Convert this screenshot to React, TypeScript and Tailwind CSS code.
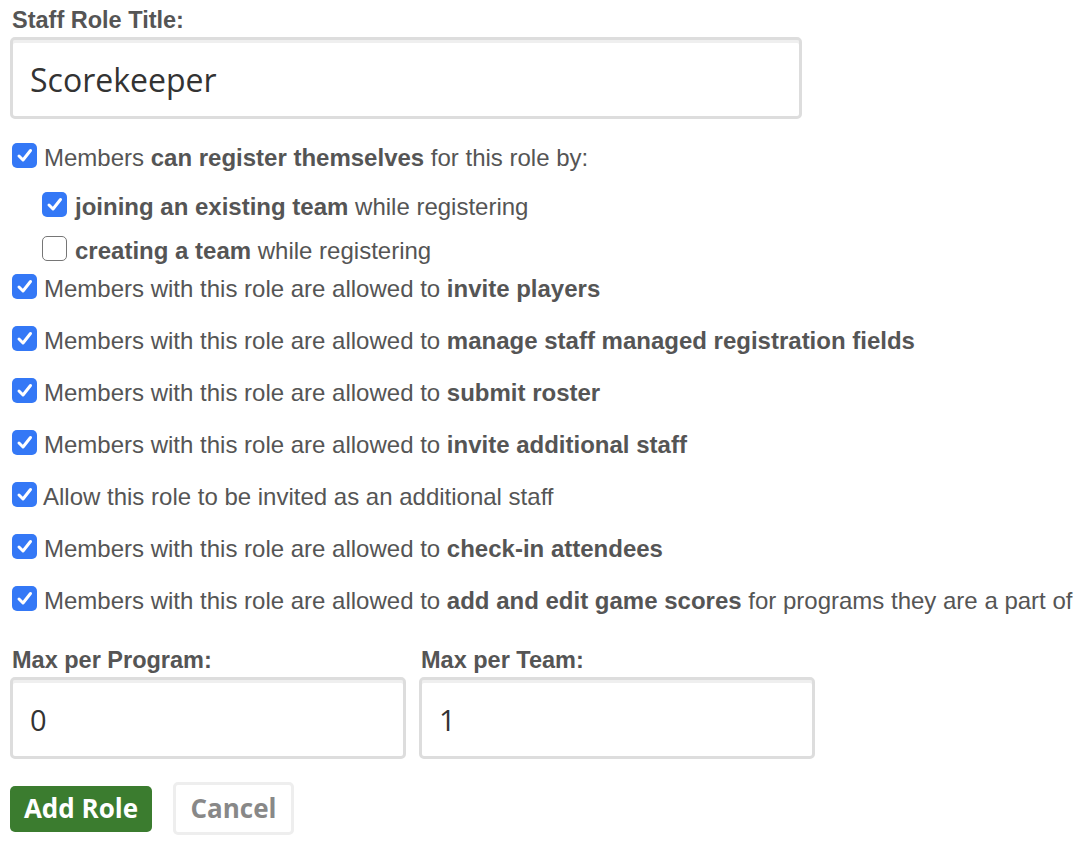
import React from "react";

function Box({ checked }: { checked: boolean }) {
  if (!checked) {
    return (
      <div className="w-[25px] h-[25px] shrink-0 rounded-[5px] border-[1.5px] border-[#767676] bg-white" />
    );
  }
  return (
    <div className="w-[25px] h-[25px] shrink-0 rounded-[5px] bg-[#3478f6] flex items-center justify-center">
      <svg width="17" height="17" viewBox="0 0 17 17">
        <path d="M3 9 L7 13 L14.5 3.5" fill="none" stroke="white" strokeWidth="3" strokeLinecap="round" strokeLinejoin="round" />
      </svg>
    </div>
  );
}

function Row({ checked = true, indent = false, children, h, gap = "gap-[7px]" }: { checked?: boolean; indent?: boolean; children: React.ReactNode; h: string; gap?: string }) {
  return (
    <div className={`flex items-center ${gap} ${h} ${indent ? "pl-[42px]" : "pl-[12px]"}`}>
      <Box checked={checked} />
      <span className="pt-[6px] text-[24px] leading-none text-[#555] whitespace-nowrap">{children}</span>
    </div>
  );
}

export default function App() {
  const inputCls =
    "h-[82px] border-[3px] border-[#dddddd] rounded-[5px] bg-white shadow-[inset_0_3px_0_#efefef] flex items-center pl-[17px] pt-[3px] text-[32px] text-[#333] font-['Open_Sans',sans-serif]";
  return (
    <div className="w-[1086px] h-[842px] bg-white font-['Liberation_Sans',Arial,sans-serif] overflow-hidden">
      <div className="pt-[8px] pl-[12px] text-[23.5px] font-bold text-[#555] leading-[24px]">Staff Role Title:</div>
      <div className="mt-[5px] ml-[10px] w-[792px]">
        <div className={inputCls}>Scorekeeper</div>
      </div>
      <div className="mt-[22px]">
        <Row h="h-[28px]">
          Members <b>can register themselves</b> for this role by:
        </Row>
        <div className="mt-[21px]">
          <Row h="h-[28px]" indent gap="gap-[8px]">
            <b>joining an existing team</b> while registering
          </Row>
        </div>
        <div className="mt-[16px]">
          <Row h="h-[28px]" indent checked={false} gap="gap-[8px]">
            <b>creating a team</b> while registering
          </Row>
        </div>
        <div className="mt-[10px]">
          <Row h="h-[28px]">
            Members with this role are allowed to <b>invite players</b>
          </Row>
        </div>
        <div className="mt-[24px] flex flex-col gap-[24px]">
          <Row h="h-[28px]">
            Members with this role are allowed to <b>manage staff managed registration fields</b>
          </Row>
          <Row h="h-[28px]">
            Members with this role are allowed to <b>submit roster</b>
          </Row>
          <Row h="h-[28px]">
            Members with this role are allowed to <b>invite additional staff</b>
          </Row>
          <Row h="h-[28px]" gap="gap-[6px]">
            Allow this role to be invited as an additional staff
          </Row>
          <Row h="h-[28px]">
            Members with this role are allowed to <b>check-in attendees</b>
          </Row>
          <Row h="h-[28px]">
            Members with this role are allowed to <b>add and edit game scores</b> for programs they are a part of
          </Row>
        </div>
      </div>
      <div className="mt-[36px] ml-[10px] flex gap-[13px]">
        <div className="w-[396px]">
          <div className="pl-[2px] text-[23.5px] font-bold text-[#555] leading-[24px]">Max per Program:</div>
          <div className={`mt-[5px] ${inputCls} h-[81px] !text-[29px]`}>0</div>
        </div>
        <div className="w-[396px]">
          <div className="pl-[2px] text-[23.5px] font-bold text-[#555] leading-[24px]">Max per Team:</div>
          <div className={`mt-[5px] ${inputCls} h-[81px] !text-[29px]`}>1</div>
        </div>
      </div>
      <div className="mt-[23px] ml-[10px] flex items-center gap-[21px] font-['Open_Sans',sans-serif] font-bold text-[26px]">
        <div className="h-[46px] w-[142px] rounded-[5px] bg-[#3b7c2f] text-white flex items-center justify-center">Add Role</div>
        <div className="h-[53px] w-[121px] rounded-[5px] border-[3px] border-[#eeeeee] text-[#888] flex items-center justify-center">Cancel</div>
      </div>
    </div>
  );
}
